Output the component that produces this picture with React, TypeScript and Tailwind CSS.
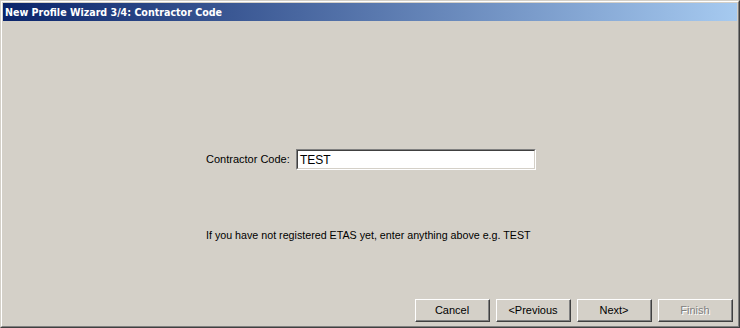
import React from "react";

function Btn({ label, disabled }: { label: string; disabled?: boolean }) {
  return (
    <div className="w-[75px] h-[23px] border-t border-l border-t-white border-l-white border-r border-b border-r-[#404040] border-b-[#404040] bg-[#d4d0c8]">
      <div className="w-full h-full border-r border-b border-r-[#808080] border-b-[#808080] flex items-center justify-center">
        {disabled ? (
          <span className="text-[#808080] [text-shadow:1px_1px_0_#ffffff]">{label}</span>
        ) : (
          <span className="text-black">{label}</span>
        )}
      </div>
    </div>
  );
}

export default function App() {
  return (
    <div className="w-[740px] h-[328px] bg-[#d4d0c8] border border-t-[#d4d0c8] border-l-[#d4d0c8] border-r-[#404040] border-b-[#404040] text-[11px] text-black [font-family:'Liberation_Sans',Arial,sans-serif]">
      <div className="w-full h-full border border-t-white border-l-white border-r-[#808080] border-b-[#808080] p-px flex flex-col">
        <div className="h-[18px] bg-[linear-gradient(to_right,#0a246a,#a6caf0)] flex items-center pl-[2px]">
          <span className="text-white font-bold text-[10.6px] [font-family:'DejaVu_Sans_Condensed','DejaVu_Sans',sans-serif] leading-none">
            New Profile Wizard 3/4: Contractor Code
          </span>
        </div>
        <div className="flex-1 flex flex-col">
          <div className="h-[128px]" />
          <div className="flex items-center h-[21px] pl-[203px]">
            <span className="w-[90px]">Contractor Code:</span>
            <div className="w-[240px] h-[21px] border border-t-[#808080] border-l-[#808080] border-r-white border-b-white">
              <div className="w-full h-full border border-t-[#404040] border-l-[#404040] border-r-[#d4d0c8] border-b-[#d4d0c8] bg-white flex items-center pl-[2px] text-[12px]">
                TEST
              </div>
            </div>
          </div>
          <div className="h-[55px]" />
          <div className="pl-[203px] h-[20px] flex items-center text-[10.7px]">
            If you have not registered ETAS yet, enter anything above e.g. TEST
          </div>
          <div className="flex-1" />
          <div className="flex justify-end gap-[6px] pr-[4px] pb-[3px]">
            <Btn label="Cancel" />
            <Btn label="<Previous" />
            <Btn label="Next>" />
            <Btn label="Finish" disabled />
          </div>
        </div>
      </div>
    </div>
  );
}
